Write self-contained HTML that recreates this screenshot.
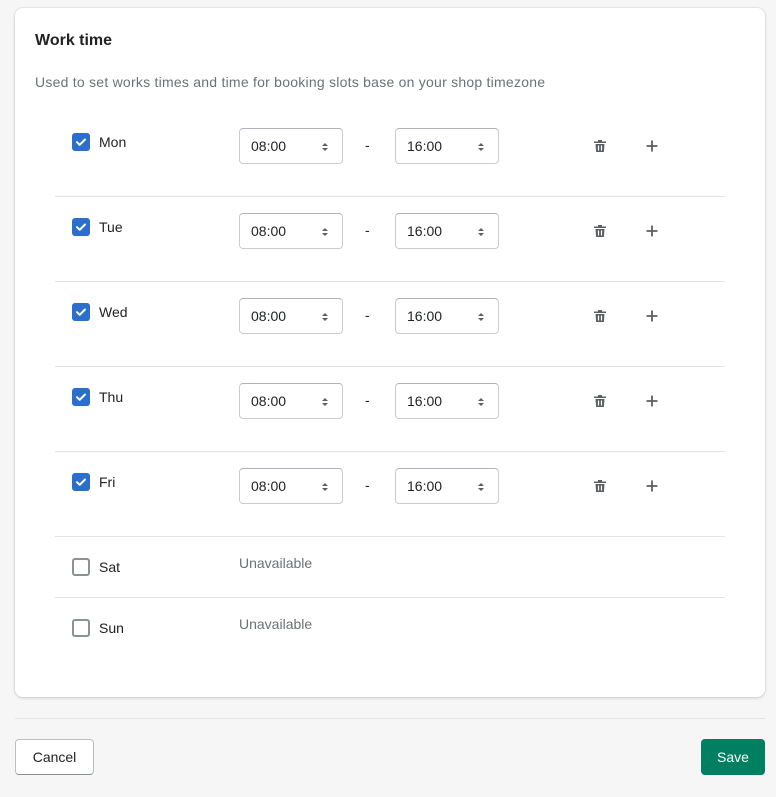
<!DOCTYPE html>
<html><head><style>
*{box-sizing:border-box;margin:0;padding:0}
body{width:776px;height:797px;background:#f6f6f7;font-family:"Liberation Sans",sans-serif;color:#202223;position:relative;overflow:hidden}
.card{position:absolute;left:15px;top:8px;width:750px;height:689px;background:#fff;border-radius:8px;box-shadow:0 0 0 1px rgba(63,63,68,.05),0 1px 3px rgba(63,63,68,.2)}
.title{position:absolute;left:35px;top:32px;font-size:16px;font-weight:bold}
.sub{position:absolute;left:35px;top:74px;font-size:14px;color:#6d7175;letter-spacing:0.24px}
.row{position:absolute;left:0;width:776px}
.cb{position:absolute;left:72px;width:18px;height:18px;border-radius:3px}
.cb.on{background:#2c6ecb}
.cb.off{border:2px solid #8c9196;background:#fff}
.lbl{position:absolute;left:99px;font-size:14px}
.sel{position:absolute;width:104px;height:36px;border:1px solid #c9cccf;border-top-color:#aeb4b9;border-radius:4px;font-size:14px;padding:9px 0 0 11px}
.sel svg{position:absolute;right:13px;top:12px}
.dash{position:absolute;left:365px;font-size:14px}
.div{position:absolute;left:55px;width:670px;height:1px;background:#e1e3e5}
.un{position:absolute;left:239px;font-size:14px;color:#6d7175}
.ic{position:absolute}
.btn{position:absolute;top:739px;height:36px;border-radius:4px;font-size:14px;text-align:center;line-height:34px}
</style></head><body>
<div class="card"></div>
<div class="title">Work time</div>
<div class="sub">Used to set works times and time for booking slots base on your shop timezone</div>

<div class="row" style="top:0">
<div class="cb on" style="top:133px"><svg width="18" height="18"><path d="M5 9.2l2.7 2.6L13 6.5" stroke="#fff" stroke-width="2" fill="none" stroke-linecap="round" stroke-linejoin="round"/></svg></div>
<div class="lbl" style="top:134px">Mon</div>
<div class="sel" style="left:239px;top:128px">08:00<svg width="8" height="12"><path d="M1 5L4 2L7 5ZM1 7L4 10L7 7Z" fill="#5c5f62"/></svg></div>
<div class="dash" style="top:137px">-</div>
<div class="sel" style="left:395px;top:128px">16:00<svg width="8" height="12"><path d="M1 5L4 2L7 5ZM1 7L4 10L7 7Z" fill="#5c5f62"/></svg></div>
<svg class="ic" style="left:592px;top:138px" width="16" height="16"><path d="M6 2h4v1.5h4v1.5H2V3.5h4z M3.5 6h9l-.6 8H4.1z" fill="#5c5f62"/><path d="M6.5 7.5v5M9.5 7.5v5" stroke="#fff" stroke-width="1.2"/></svg>
<svg class="ic" style="left:644px;top:138px" width="16" height="16"><path d="M8 2.5v11M2.5 8h11" stroke="#5c5f62" stroke-width="1.8"/></svg>
<div class="div" style="top:196px"></div>
</div>
<div class="row" style="top:85px">
<div class="cb on" style="top:133px"><svg width="18" height="18"><path d="M5 9.2l2.7 2.6L13 6.5" stroke="#fff" stroke-width="2" fill="none" stroke-linecap="round" stroke-linejoin="round"/></svg></div>
<div class="lbl" style="top:134px">Tue</div>
<div class="sel" style="left:239px;top:128px">08:00<svg width="8" height="12"><path d="M1 5L4 2L7 5ZM1 7L4 10L7 7Z" fill="#5c5f62"/></svg></div>
<div class="dash" style="top:137px">-</div>
<div class="sel" style="left:395px;top:128px">16:00<svg width="8" height="12"><path d="M1 5L4 2L7 5ZM1 7L4 10L7 7Z" fill="#5c5f62"/></svg></div>
<svg class="ic" style="left:592px;top:138px" width="16" height="16"><path d="M6 2h4v1.5h4v1.5H2V3.5h4z M3.5 6h9l-.6 8H4.1z" fill="#5c5f62"/><path d="M6.5 7.5v5M9.5 7.5v5" stroke="#fff" stroke-width="1.2"/></svg>
<svg class="ic" style="left:644px;top:138px" width="16" height="16"><path d="M8 2.5v11M2.5 8h11" stroke="#5c5f62" stroke-width="1.8"/></svg>
<div class="div" style="top:196px"></div>
</div>
<div class="row" style="top:170px">
<div class="cb on" style="top:133px"><svg width="18" height="18"><path d="M5 9.2l2.7 2.6L13 6.5" stroke="#fff" stroke-width="2" fill="none" stroke-linecap="round" stroke-linejoin="round"/></svg></div>
<div class="lbl" style="top:134px">Wed</div>
<div class="sel" style="left:239px;top:128px">08:00<svg width="8" height="12"><path d="M1 5L4 2L7 5ZM1 7L4 10L7 7Z" fill="#5c5f62"/></svg></div>
<div class="dash" style="top:137px">-</div>
<div class="sel" style="left:395px;top:128px">16:00<svg width="8" height="12"><path d="M1 5L4 2L7 5ZM1 7L4 10L7 7Z" fill="#5c5f62"/></svg></div>
<svg class="ic" style="left:592px;top:138px" width="16" height="16"><path d="M6 2h4v1.5h4v1.5H2V3.5h4z M3.5 6h9l-.6 8H4.1z" fill="#5c5f62"/><path d="M6.5 7.5v5M9.5 7.5v5" stroke="#fff" stroke-width="1.2"/></svg>
<svg class="ic" style="left:644px;top:138px" width="16" height="16"><path d="M8 2.5v11M2.5 8h11" stroke="#5c5f62" stroke-width="1.8"/></svg>
<div class="div" style="top:196px"></div>
</div>
<div class="row" style="top:255px">
<div class="cb on" style="top:133px"><svg width="18" height="18"><path d="M5 9.2l2.7 2.6L13 6.5" stroke="#fff" stroke-width="2" fill="none" stroke-linecap="round" stroke-linejoin="round"/></svg></div>
<div class="lbl" style="top:134px">Thu</div>
<div class="sel" style="left:239px;top:128px">08:00<svg width="8" height="12"><path d="M1 5L4 2L7 5ZM1 7L4 10L7 7Z" fill="#5c5f62"/></svg></div>
<div class="dash" style="top:137px">-</div>
<div class="sel" style="left:395px;top:128px">16:00<svg width="8" height="12"><path d="M1 5L4 2L7 5ZM1 7L4 10L7 7Z" fill="#5c5f62"/></svg></div>
<svg class="ic" style="left:592px;top:138px" width="16" height="16"><path d="M6 2h4v1.5h4v1.5H2V3.5h4z M3.5 6h9l-.6 8H4.1z" fill="#5c5f62"/><path d="M6.5 7.5v5M9.5 7.5v5" stroke="#fff" stroke-width="1.2"/></svg>
<svg class="ic" style="left:644px;top:138px" width="16" height="16"><path d="M8 2.5v11M2.5 8h11" stroke="#5c5f62" stroke-width="1.8"/></svg>
<div class="div" style="top:196px"></div>
</div>
<div class="row" style="top:340px">
<div class="cb on" style="top:133px"><svg width="18" height="18"><path d="M5 9.2l2.7 2.6L13 6.5" stroke="#fff" stroke-width="2" fill="none" stroke-linecap="round" stroke-linejoin="round"/></svg></div>
<div class="lbl" style="top:134px">Fri</div>
<div class="sel" style="left:239px;top:128px">08:00<svg width="8" height="12"><path d="M1 5L4 2L7 5ZM1 7L4 10L7 7Z" fill="#5c5f62"/></svg></div>
<div class="dash" style="top:137px">-</div>
<div class="sel" style="left:395px;top:128px">16:00<svg width="8" height="12"><path d="M1 5L4 2L7 5ZM1 7L4 10L7 7Z" fill="#5c5f62"/></svg></div>
<svg class="ic" style="left:592px;top:138px" width="16" height="16"><path d="M6 2h4v1.5h4v1.5H2V3.5h4z M3.5 6h9l-.6 8H4.1z" fill="#5c5f62"/><path d="M6.5 7.5v5M9.5 7.5v5" stroke="#fff" stroke-width="1.2"/></svg>
<svg class="ic" style="left:644px;top:138px" width="16" height="16"><path d="M8 2.5v11M2.5 8h11" stroke="#5c5f62" stroke-width="1.8"/></svg>
<div class="div" style="top:196px"></div>
</div>

<div class="cb off" style="top:558px"></div>
<div class="lbl" style="top:559px">Sat</div>
<div class="un" style="top:555px">Unavailable</div>
<div class="div" style="top:597px"></div>
<div class="cb off" style="top:619px"></div>
<div class="lbl" style="top:620px">Sun</div>
<div class="un" style="top:616px">Unavailable</div>

<div style="position:absolute;left:15px;top:718px;width:750px;height:1px;background:#e1e3e5"></div>
<div class="btn" style="left:15px;width:79px;background:#fff;border:1px solid #babfc3;border-bottom-color:#8c9196">Cancel</div>
<div class="btn" style="left:701px;width:64px;background:#008060;color:#fff;line-height:36px">Save</div>
</body></html>
